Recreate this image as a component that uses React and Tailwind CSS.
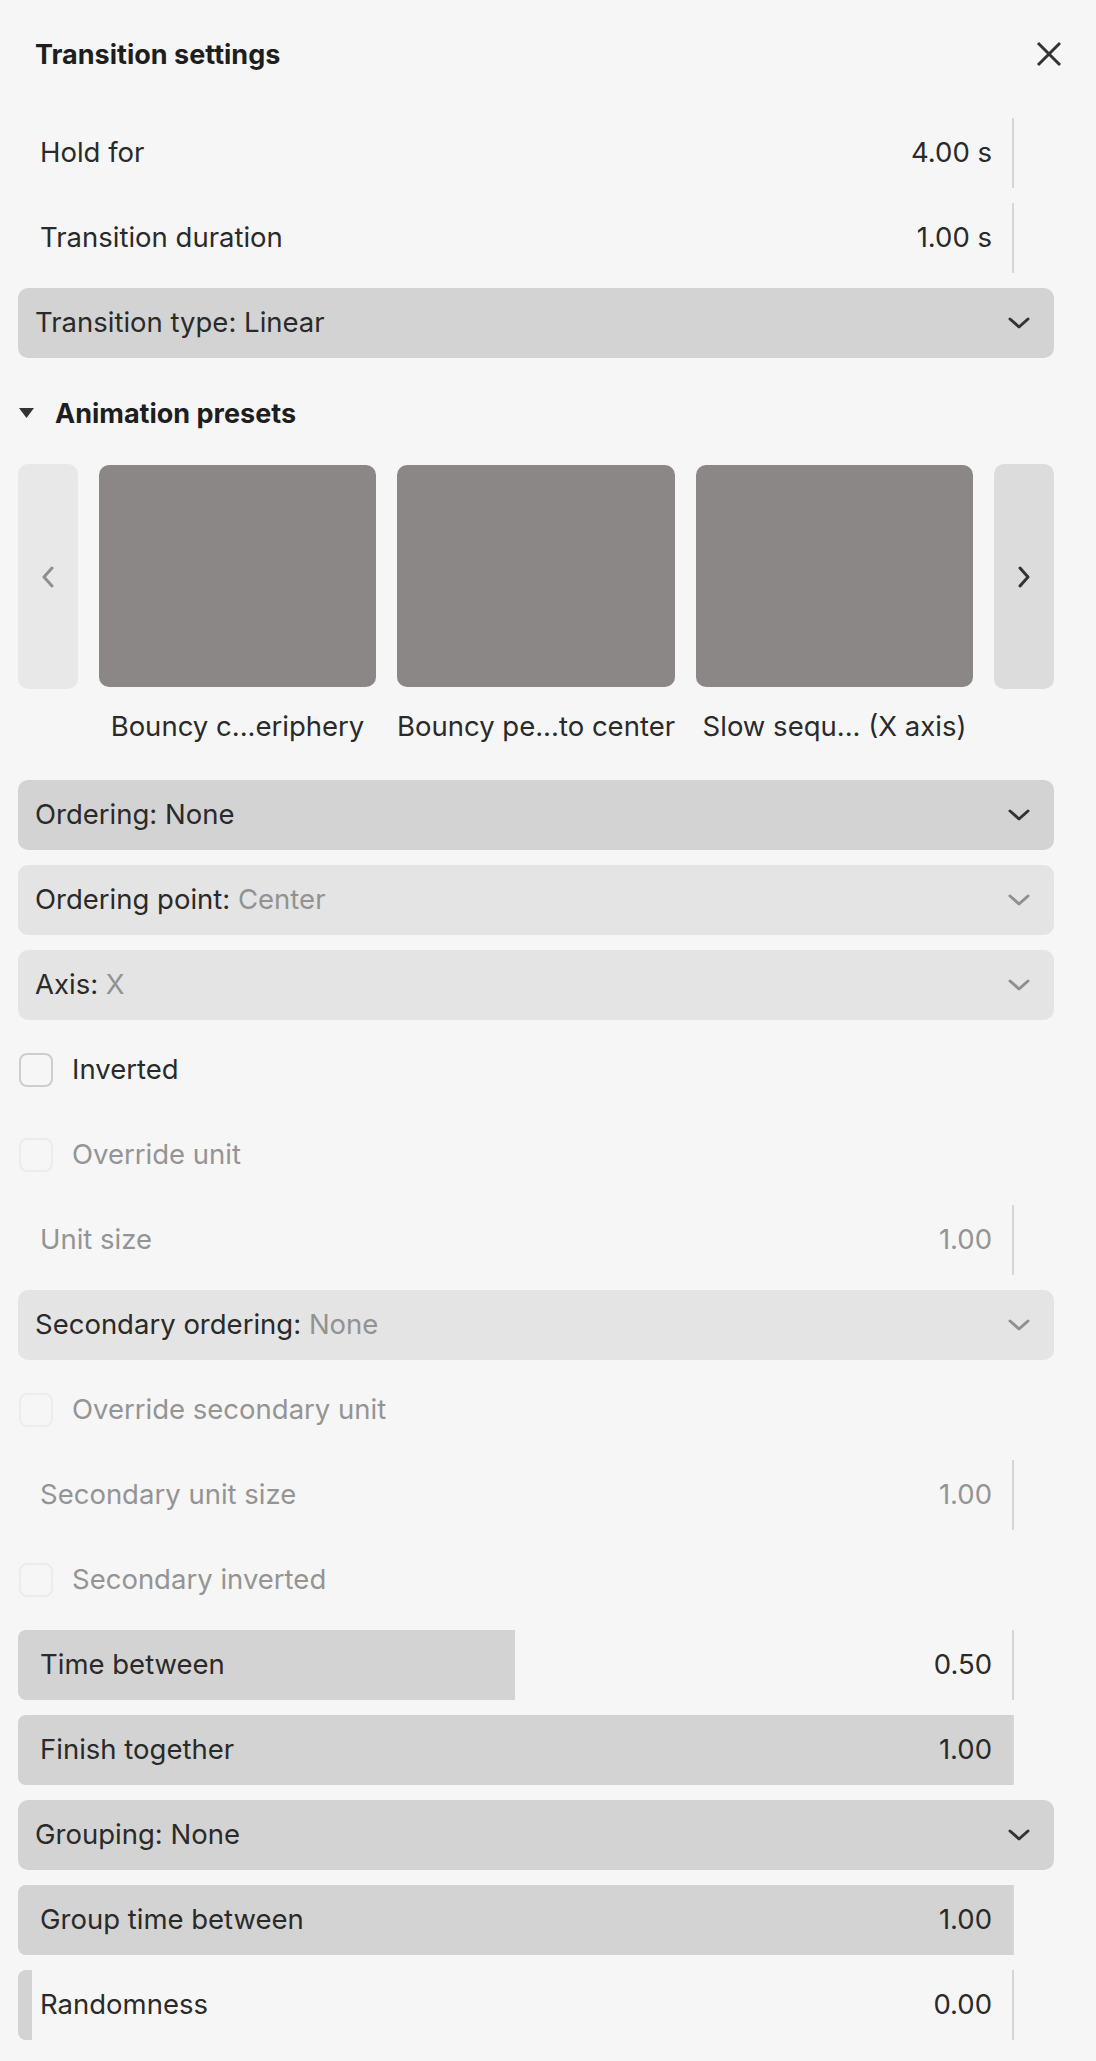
import React from 'react';

const presets = ['Bouncy c...eriphery', 'Bouncy pe...to center', 'Slow sequ... (X axis)'];

function Chevron({ muted }) {
  return (
    <svg width="22" height="12" viewBox="0 0 22 12" fill="none" className={muted ? 'text-[#8f8f8f]' : 'text-[#333333]'}>
      <polyline points="2,2 11,10 20,2" stroke="currentColor" strokeWidth="3" strokeLinecap="round" strokeLinejoin="round" />
    </svg>
  );
}

function Select({ label, value, muted }) {
  return (
    <div className={`flex h-[70px] items-center justify-between rounded-[10px] pl-[17px] pr-[24px] ${muted ? 'bg-[#e4e4e4]' : 'bg-[#d3d3d3]'}`}>
      <span className="text-[#2a2a2a]">
        {label}: <span className={muted ? 'text-[#929292]' : ''}>{value}</span>
      </span>
      <Chevron muted={muted} />
    </div>
  );
}

function NumberRow({ label, value, muted }) {
  return (
    <div className={`mr-[40px] flex h-[70px] items-center justify-between border-r-2 border-[#d6d6d6] pl-[22px] pr-[20px] ${muted ? 'text-[#949494]' : 'text-[#2a2a2a]'}`}>
      <span>{label}</span>
      <span>{value}</span>
    </div>
  );
}

function SliderRow({ label, value, fill }) {
  return (
    <div className="relative mr-[40px] flex h-[70px] items-center justify-between border-r-2 border-[#d6d6d6] pl-[22px] pr-[20px] text-[#2a2a2a]">
      <div
        className="absolute inset-y-0 left-0 rounded-l-[8px] bg-[#d3d3d3]"
        style={{ width: `max(14px, ${fill * 100}%)` }}
      />
      <span className="relative">{label}</span>
      <span className="relative">{value}</span>
    </div>
  );
}

function Check({ label, disabled }) {
  return (
    <div className="flex h-[70px] items-center gap-[19px] pl-[1px]">
      <span className={`h-[34px] w-[34px] rounded-[8px] border-2 ${disabled ? 'border-[#ececec]' : 'border-[#cdcdcd]'}`} />
      <span className={disabled ? 'text-[#949494]' : 'text-[#2a2a2a]'}>{label}</span>
    </div>
  );
}

export default function App() {
  return (
    <div className="min-h-screen w-full bg-[#f6f6f6] font-['Inter','Noto_Sans',sans-serif] text-[27.5px] leading-none">
      {/* header */}
      <div className="flex h-[108px] items-center justify-between pl-[35px] pr-[34px]">
        <h1 className="text-[27px] font-bold text-[#1e1e1e]">Transition settings</h1>
        <svg width="26" height="26" viewBox="0 0 26 26" className="text-[#333333]">
          <path d="M2 2 L24 24 M24 2 L2 24" stroke="currentColor" strokeWidth="3" />
        </svg>
      </div>

      <div className="mt-[10px] flex w-[1054px] flex-col gap-[15px] pb-[22px] pl-[18px]">
        <NumberRow label="Hold for" value="4.00 s" />
        <NumberRow label="Transition duration" value="1.00 s" />
        <Select label="Transition type" value="Linear" />

        {/* presets */}
        <div className="flex h-[80px] items-center gap-[21px]">
          <svg width="15" height="10" viewBox="0 0 15 10" className="ml-[1px] text-[#333333]">
            <polygon points="0,0 15,0 7.5,10" fill="currentColor" />
          </svg>
          <span className="text-[27px] font-bold text-[#1e1e1e]">Animation presets</span>
        </div>

        <div className="-mt-[4px] grid grid-cols-[60px_1fr_1fr_1fr_60px] gap-x-[21px]">
          <button className="flex h-[225px] items-center justify-center rounded-[10px] bg-[#e8e8e8]">
            <svg width="12" height="22" viewBox="0 0 12 22" fill="none" className="text-[#8f8f8f]">
              <polyline points="10,2 2,11 10,20" stroke="currentColor" strokeWidth="3" strokeLinecap="round" strokeLinejoin="round" />
            </svg>
          </button>
          {presets.map((p) => (
            <div key={p} className="mt-[1px] h-[222px] rounded-[10px] bg-[#8c8787]" />
          ))}
          <button className="flex h-[225px] items-center justify-center rounded-[10px] bg-[#dcdcdc]">
            <svg width="12" height="22" viewBox="0 0 12 22" fill="none" className="text-[#333333]">
              <polyline points="2,2 10,11 2,20" stroke="currentColor" strokeWidth="3" strokeLinecap="round" strokeLinejoin="round" />
            </svg>
          </button>
          <div />
          {presets.map((p) => (
            <div key={p} className="flex h-[76px] items-center justify-center whitespace-nowrap text-[#2a2a2a]">
              {p}
            </div>
          ))}
          <div />
        </div>

        <Select label="Ordering" value="None" />
        <Select label="Ordering point" value="Center" muted />
        <Select label="Axis" value="X" muted />
        <Check label="Inverted" />
        <Check label="Override unit" disabled />
        <NumberRow label="Unit size" value="1.00" muted />
        <Select label="Secondary ordering" value="None" muted />
        <Check label="Override secondary unit" disabled />
        <NumberRow label="Secondary unit size" value="1.00" muted />
        <Check label="Secondary inverted" disabled />
        <SliderRow label="Time between" value="0.50" fill={0.5} />
        <SliderRow label="Finish together" value="1.00" fill={1} />
        <Select label="Grouping" value="None" />
        <SliderRow label="Group time between" value="1.00" fill={1} />
        <SliderRow label="Randomness" value="0.00" fill={0} />
      </div>
    </div>
  );
}
